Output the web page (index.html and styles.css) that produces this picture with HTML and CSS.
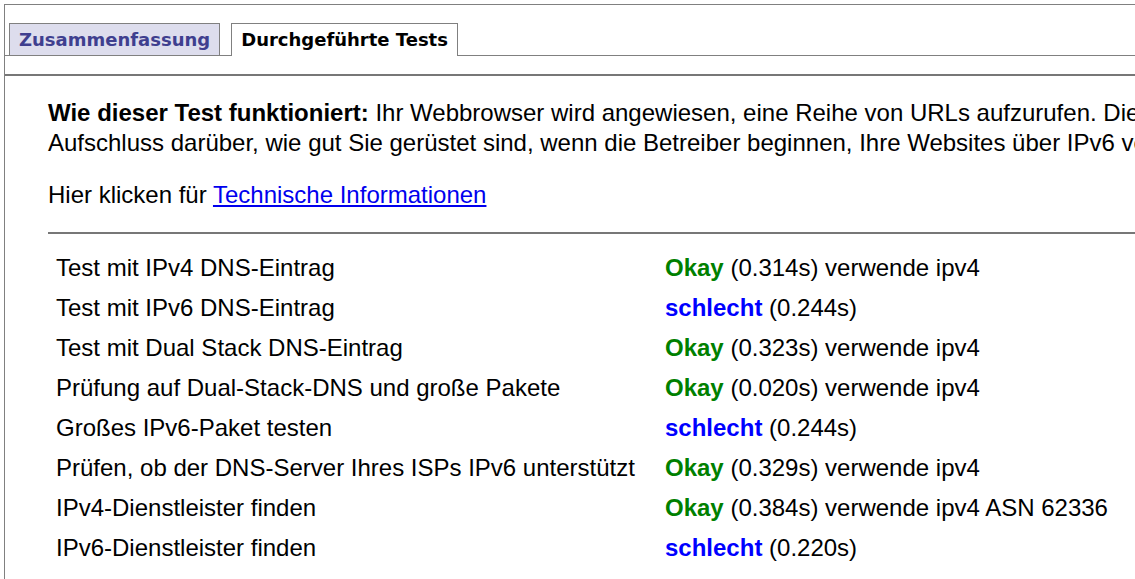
FILE: index.html
```html
<!DOCTYPE html>
<html lang="de">
<head>
  <meta charset="UTF-8">
  <title>Durchgeführte Tests</title>
  <link rel="stylesheet" href="styles.css">
</head>
<body>
  <div class="page">
    <div class="tabs">
      <a class="tab" href="#summary">Zusammenfassung</a>
      <a class="tab active" href="#tests">Durchgeführte Tests</a>
    </div>

    <div class="panel">
      <p class="intro"><b>Wie dieser Test funktioniert:</b> Ihr Webbrowser wird angewiesen, eine Reihe von URLs aufzurufen. Die einzelnen getesteten URLs geben<br>
      Aufschluss darüber, wie gut Sie gerüstet sind, wenn die Betreiber beginnen, Ihre Websites über IPv6 verfügbar zu machen.</p>

      <p class="intro">Hier klicken für <a href="#technical">Technische Informationen</a></p>

      <hr class="rule">

      <table class="results">
        <tr><td class="name">Test mit IPv4 DNS-Eintrag</td><td><span class="ok">Okay</span> (0.314s) verwende ipv4</td></tr>
        <tr><td class="name">Test mit IPv6 DNS-Eintrag</td><td><span class="bad">schlecht</span> (0.244s)</td></tr>
        <tr><td class="name">Test mit Dual Stack DNS-Eintrag</td><td><span class="ok">Okay</span> (0.323s) verwende ipv4</td></tr>
        <tr><td class="name">Prüfung auf Dual-Stack-DNS und große Pakete</td><td><span class="ok">Okay</span> (0.020s) verwende ipv4</td></tr>
        <tr><td class="name">Großes IPv6-Paket testen</td><td><span class="bad">schlecht</span> (0.244s)</td></tr>
        <tr><td class="name">Prüfen, ob der DNS-Server Ihres ISPs IPv6 unterstützt</td><td><span class="ok">Okay</span> (0.329s) verwende ipv4</td></tr>
        <tr><td class="name">IPv4-Dienstleister finden</td><td><span class="ok">Okay</span> (0.384s) verwende ipv4 ASN 62336</td></tr>
        <tr><td class="name">IPv6-Dienstleister finden</td><td><span class="bad">schlecht</span> (0.220s)</td></tr>
      </table>
    </div>
  </div>
</body>
</html>
```

FILE: styles.css
```css
html, body {
    margin: 0;
    background: #ffffff;
    overflow: hidden;
}

body {
    font-family: "Liberation Sans", Arial, sans-serif;
    font-size: 24px;
    color: #000000;
}

.page {
    width: 1600px;
    margin: 4px 0 0 4px;
    border-top: 1px solid #808080;
    border-left: 1px solid #808080;
    min-height: 600px;
}

/* tab strip */
.tabs {
    display: flex;
    align-items: flex-end;
    gap: 11px;
    padding: 18px 0 0 4px;
    border-bottom: 1px solid #808080;
}

.tab {
    display: block;
    height: 31px;
    line-height: 32px;
    padding: 0 9px;
    border: 1px solid #808080;
    border-bottom: none;
    font-family: "DejaVu Sans", Verdana, sans-serif;
    font-size: 18px;
    font-weight: bold;
    text-decoration: none;
    color: #3f3f8f;
    background: #dddded;
}

.tab.active {
    color: #000000;
    background: #ffffff;
    margin-bottom: -1px;
    height: 32px;
}

/* content below the tabs */
.panel {
    margin-top: 18px;
    border-top: 2px solid #777777;
    padding: 22px 0 0 43px;
}

.intro {
    margin: 0 0 22px 0;
    line-height: 30px;
    white-space: nowrap;
}

.intro a {
    color: #0000ee;
}

.rule {
    margin: 0;
    border: none;
    border-top: 2px solid #777777;
}

.results {
    border-collapse: collapse;
    margin-top: 14px;
}

.results td {
    padding: 7px 8px 8px 8px;
    line-height: 25px;
    white-space: nowrap;
}

.results td.name {
    width: 593px;
}

.ok {
    color: #008000;
    font-weight: bold;
}

.bad {
    color: #0000ff;
    font-weight: bold;
}
```
